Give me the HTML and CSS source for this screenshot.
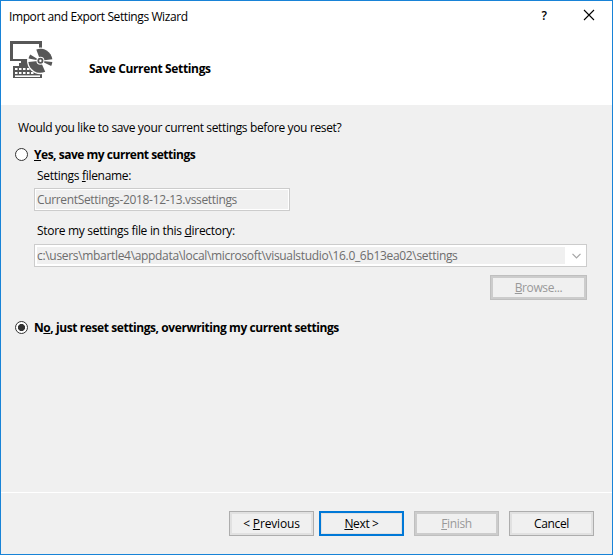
FILE: index.html
```html
<!DOCTYPE html>
<html lang="en">
<head>
<meta charset="utf-8">
<title>Import and Export Settings Wizard</title>
<link rel="stylesheet" href="styles.css">
</head>
<body>
<main class="window">
  <header class="header">
    <div class="titlebar">
      <span class="title"><span class="t-title">Import and Export Settings Wizard</span></span>
      <span class="help">?</span>
      <svg class="close" width="12" height="12" viewBox="0 0 12 12"><path d="M1 1 11 11M11 1 1 11" fill="none" stroke="#000" stroke-width="1.1"/></svg>
    </div>
    <div class="banner">
      <svg class="logo" width="44" height="40" viewBox="0 0 44 40">
        <g fill="#575757">
          <path fill-rule="evenodd" d="M0 0H32V20H0ZM3 3V18H29V3Z"/>
          <path d="M11 20H20V22H22V25H9V22H11Z"/>
          <path d="M3 25H32V37H3Z"/>
        </g>
        <path d="M5 28H20M5 32H24" stroke="#fff" stroke-width="2" stroke-dasharray="2.5 1.5"/>
        <path d="M5 35.2H30" stroke="#fff" stroke-width="1.6"/>
        <circle cx="30.4" cy="19.8" r="13.4" fill="#fff"/>
        <g fill="#575757">
          <path d="M30.4 19.8 26.3 8.5A12 12 0 0 1 42.3 18.2Z"/>
          <path d="M30.4 19.8 42.3 20.9A12 12 0 0 1 41.2 25Z"/>
          <path d="M30.4 19.8 35.2 30.8A12 12 0 0 1 18.4 20.9Z"/>
          <path d="M30.4 19.8 18.6 17.6A12 12 0 0 1 20.2 13.4Z"/>
        </g>
        <circle cx="30.4" cy="19.8" r="4" fill="#fff"/>
        <circle cx="30.4" cy="19.8" r="2.1" fill="#fff" stroke="#575757" stroke-width="1.8"/>
      </svg>
      <h1 class="heading t-heading">Save Current Settings</h1>
    </div>
  </header>
  <section class="content">
    <p class="question t-question">Would you like to save your current settings before you reset?</p>
    <div class="option">
      <span class="radio"></span><b class="t-yes"><u>Y</u>es, save my current settings</b>
    </div>
    <div class="fields">
      <div class="label t-file">Settings <u>f</u>ilename:</div>
      <div class="box filename"><span class="value t-name">CurrentSettings-2018-12-13.vssettings</span></div>
      <div class="label t-store">Store my settings file in this <u>d</u>irectory:</div>
      <div class="box directory"><span class="value t-path">c:\users\mbartle4\appdata\local\microsoft\visualstudio\16.0_6b13ea02\settings</span>
        <svg class="chevron" width="9" height="6" viewBox="0 0 9 6"><path d="M.5 .8 4.5 4.8 8.5 .8" fill="none" stroke="#a6a6a6" stroke-width="1.2"/></svg>
      </div>
      <div class="button disabled browse"><span class="t-browse"><u>B</u>rowse...</span></div>
    </div>
    <div class="option">
      <span class="radio checked"></span><b class="t-no">N<u>o</u>, just reset settings, overwriting my current settings</b>
    </div>
  </section>
  <footer class="footer">
    <div class="button"><span class="t-prev">&lt; <u>P</u>revious</span></div>
    <div class="button default"><span class="t-next"><u>N</u>ext &gt;</span></div>
    <div class="button disabled spaced"><span class="t-finish"><u>F</u>inish</span></div>
    <div class="button spaced"><span class="t-cancel">Cancel</span></div>
  </footer>
</main>
</body>
</html>
```

FILE: styles.css
```css
* { box-sizing: border-box; }
body {
  margin: 0;
  font: 12px/16px "Open Sans", "Noto Sans", sans-serif;
  color: #000;
}
u { text-decoration: underline; text-decoration-thickness: 1px; text-underline-offset: 1px; text-decoration-skip-ink: none; }
.window {
  width: 613px;
  height: 555px;
  border: 1px solid #1883d7;
  background: #f0f0f0;
  display: flex;
  flex-direction: column;
  white-space: nowrap;
}
.header { height: 104px; background: #fff; }
.titlebar { height: 30px; display: flex; align-items: center; padding: 0 17px 0 8px; }
.title { flex: 1; padding-top: 1px; }
.help { font-weight: 600; margin-right: 36px; }
.close { margin-bottom: 2px; }
.banner { display: flex; padding: 10px 0 0 9px; }
.heading { margin: 20px 0 0 35px; font-size: 12px; line-height: 16px; font-weight: 700; }
.content { flex: 1; padding: 15px 25px 0 14px; }
.question { margin: 0 0 11px 3px; }
.option { display: flex; align-items: center; height: 16px; gap: 6px; }
.radio { width: 13px; height: 13px; border: 1px solid #333; border-radius: 50%; background: #fff; margin-bottom: 1px; }
.checked { background: radial-gradient(circle, #333 0 3.2px, #fff 3.9px); }
.fields { padding: 5px 0 0 19px; display: flex; flex-direction: column; margin-bottom: 20px; }
.label { padding-left: 3px; height: 16px; }
.box { height: 23px; border: 1px solid #ccc; background: #fff; padding: 1px; display: flex; align-items: center; color: #6d6d6d; }
.value { background: #f0f0f0; flex: 1; height: 19px; line-height: 19px; padding-left: 1px; }
.filename { width: 256px; margin: 4px 0 12px; }
.directory { margin-top: 5px; padding: 2px; }
.directory .value { height: 17px; line-height: 17px; padding-left: 0; }
.chevron { margin: 1px 3px 0 7px; }
.button {
  width: 85px;
  height: 25px;
  border: 1px solid #adadad;
  box-shadow: inset 0 0 0 2px #e1e1e1;
  display: flex;
  align-items: center;
  justify-content: center;
}
.button > span { padding-top: 1px; }
.default { border: 2px solid #0078d7; box-shadow: inset 0 0 0 1px #e1e1e1; }
.disabled { border-color: #bfbfbf; box-shadow: inset 0 0 0 2px #ccc; color: #999; }
.browse { width: 97px; align-self: flex-end; margin-top: 8px; }
.footer { height: 62px; border-top: 1px solid #fff; display: flex; justify-content: flex-end; gap: 5px; padding: 18px 18px 0 0; }
.spaced { margin-left: 5px; }
.t-title { letter-spacing: -.4px; }
.t-heading { letter-spacing: -.35px; }
.t-question { letter-spacing: -.35px; }
.t-yes { letter-spacing: -.48px; }
.t-no { letter-spacing: -.42px; }
.t-file, .t-store { letter-spacing: -.3px; }
.t-name { letter-spacing: -.34px; }
.t-path { letter-spacing: -.32px; }
.t-browse { letter-spacing: -.4px; }
.t-prev { letter-spacing: -.15px; }
.t-next, .t-finish, .t-cancel { letter-spacing: -.35px; }
```
